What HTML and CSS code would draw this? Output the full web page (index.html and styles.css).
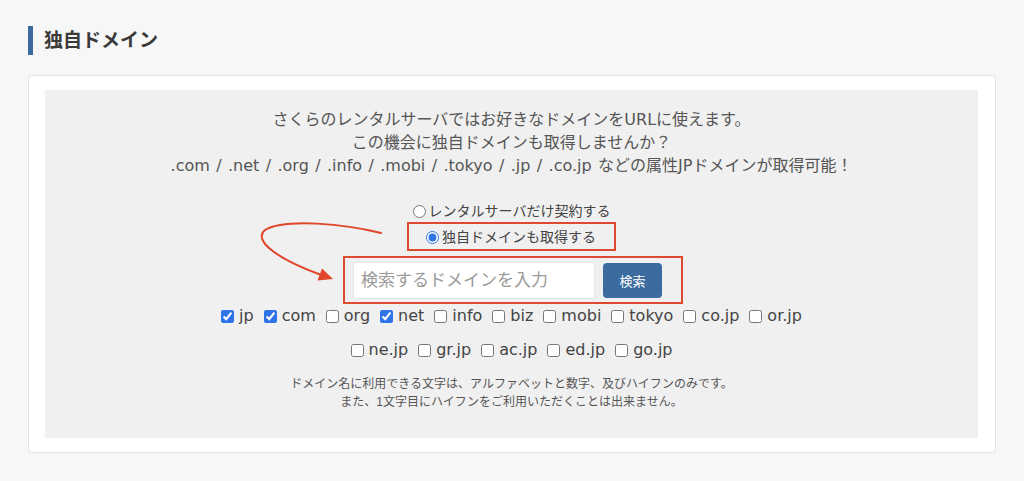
FILE: index.html
```html
<!DOCTYPE html>
<html lang="ja">
<head>
<meta charset="utf-8">
<title>独自ドメイン</title>
<link rel="stylesheet" href="styles.css">
</head>
<body>
<h2 class="section-title">独自ドメイン</h2>
<div class="card">
  <div class="domain-box">
    <p class="intro">さくらのレンタルサーバではお好きなドメインをURLに使えます。<br>この機会に独自ドメインも取得しませんか？<br>.com / .net / .org / .info / .mobi / .tokyo / .jp / .co.jp などの属性JPドメインが取得可能！</p>

    <div class="choice">
      <label class="radio-line"><input type="radio" name="plan" class="radio">レンタルサーバだけ契約する</label>
    </div>
    <div class="choice">
      <label class="radio-line highlight"><input type="radio" name="plan" class="radio" checked>独自ドメインも取得する</label>
    </div>

    <div class="search-wrap">
      <div class="search highlight">
        <input type="text" class="search-input" placeholder="検索するドメインを入力">
        <button type="button" class="search-btn">検索</button>
      </div>
    </div>

    <div class="tlds tlds-first">
      <label class="tld"><input type="checkbox" checked>jp</label>
      <label class="tld"><input type="checkbox" checked>com</label>
      <label class="tld"><input type="checkbox">org</label>
      <label class="tld"><input type="checkbox" checked>net</label>
      <label class="tld"><input type="checkbox">info</label>
      <label class="tld"><input type="checkbox">biz</label>
      <label class="tld"><input type="checkbox">mobi</label>
      <label class="tld"><input type="checkbox">tokyo</label>
      <label class="tld"><input type="checkbox">co.jp</label>
      <label class="tld"><input type="checkbox">or.jp</label>
    </div>
    <div class="tlds tlds-second">
      <label class="tld"><input type="checkbox">ne.jp</label>
      <label class="tld"><input type="checkbox">gr.jp</label>
      <label class="tld"><input type="checkbox">ac.jp</label>
      <label class="tld"><input type="checkbox">ed.jp</label>
      <label class="tld"><input type="checkbox">go.jp</label>
    </div>

    <p class="note">ドメイン名に利用できる文字は、アルファベットと数字、及びハイフンのみです。<br>また、1文字目にハイフンをご利用いただくことは出来ません。</p>

    <svg class="arrow" width="150" height="80" viewBox="0 0 150 80" aria-hidden="true">
      <path d="M136,23 C100,14 40,8 20,20 C8,30 30,48 75,64.5" fill="none" stroke="#e0462b" stroke-width="2" stroke-linecap="round"/>
      <polygon points="88,69 72.5,70.5 77,58.5" fill="#e0462b"/>
    </svg>
  </div>
</div>
</body>
</html>
```
FILE: styles.css
```css
* { box-sizing: border-box; }

html, body {
  margin: 0;
  background: #f7f7f7;
}

body {
  padding: 26px 28px 0;
  font-family: "Liberation Sans", "Noto Sans CJK JP", sans-serif;
  color: #555;
}

.section-title {
  margin: 0 0 20px;
  height: 29px;
  line-height: 29px;
  border-left: 5px solid #3d6a9e;
  padding-left: 11px;
  font-size: 19px;
  font-weight: bold;
  color: #3a3a3a;
}

.card {
  background: #fff;
  border: 1px solid #e2e2e2;
  border-radius: 3px;
  padding: 14px 17px 14px 16px;
}

.domain-box {
  position: relative;
  background: #f0f0f0;
  padding: 18px 0 27px;
  text-align: center;
}

.intro {
  margin: 0;
  font-family: "DejaVu Sans", "Noto Sans CJK JP", sans-serif;
  font-size: 16px;
  line-height: 23px;
  word-spacing: 1.3px;
  color: #555;
}

.choice {
  display: flex;
  justify-content: center;
}

.radio-line {
  display: inline-flex;
  align-items: center;
  font-size: 14px;
  line-height: 22px;
  color: #444;
}

.intro + .choice { margin-top: 23px; }

.radio {
  width: 13px;
  height: 13px;
  margin: 0 3px 0 0;
  accent-color: #2f73e8;
}

.highlight {
  border: 2px solid #dc4a2f;
}

.radio-line.highlight {
  padding: 2px 18px 0 17px;
  line-height: 23px;
}

.search-wrap {
  display: flex;
  justify-content: center;
  margin-top: 5px;
}

.search {
  display: flex;
  align-items: center;
  gap: 8px;
  padding: 4px 19px 3px 8px;
  margin-left: 3px;
}

.search-input {
  width: 242px;
  height: 37px;
  border: 1px solid #e6e6e6;
  border-radius: 2px;
  background: #fff;
  padding: 0 7px;
  font-family: "Liberation Sans", "Noto Sans CJK JP", sans-serif;
  font-size: 17px;
  color: #333;
}

.search-input::placeholder { color: #9a9a9a; }

.search-btn {
  width: 59px;
  height: 35px;
  border: 0;
  border-radius: 4px;
  background: #3c6b9f;
  color: #fff;
  font-family: "Liberation Sans", "Noto Sans CJK JP", sans-serif;
  font-size: 13px;
  padding: 0;
}

.tlds {
  display: flex;
  justify-content: center;
  gap: 10px;
  font-family: "DejaVu Sans", "Noto Sans CJK JP", sans-serif;
  font-size: 16px;
  line-height: 22px;
  color: #444;
}

.tlds-first { margin-top: 1px; }
.tlds-second { margin-top: 12px; }

.tld {
  display: inline-flex;
  align-items: center;
}

.tld input {
  width: 13px;
  height: 13px;
  margin: 0 5px 0 0;
  accent-color: #2f73e8;
}

.note {
  margin: 14px 0 0;
  font-size: 12px;
  line-height: 18px;
  color: #555;
}

.arrow {
  position: absolute;
  left: 200px;
  top: 120px;
}
```
